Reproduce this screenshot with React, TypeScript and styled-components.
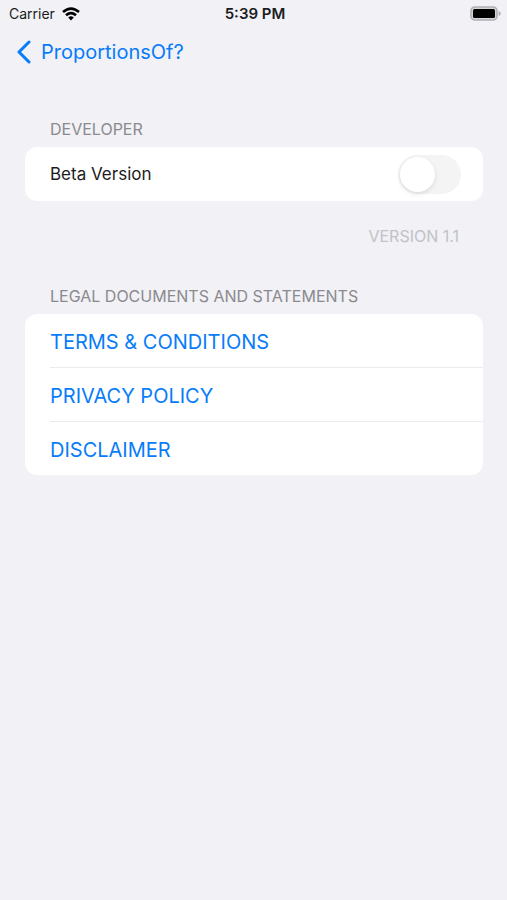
import React, { useState } from "react";
import styled, { createGlobalStyle } from "styled-components";

const GlobalStyle = createGlobalStyle`
  * { box-sizing: border-box; }
  body { margin: 0; background: #f1f1f6; color: #000; font-family: Inter, "Liberation Sans", sans-serif; }
`;
const Page = styled.div`
  min-height: 100vh;
  background: #f1f1f6;
`;
const StatusBar = styled.header`
  display: grid;
  grid-template-columns: 1fr auto 1fr;
  align-items: center;
  height: 27px;
  padding: 0 6px 0 9px;
  font-size: 14px;
  color: #1c1c1e;
`;
const Carrier = styled.div`
  display: flex;
  align-items: center;
  gap: 7px;
`;
const Time = styled.time`
  font-size: 15px;
  font-weight: 600;
`;
const Battery = styled.svg`
  justify-self: end;
`;
const NavBar = styled.nav`
  display: flex;
  align-items: center;
  height: 50px;
  padding: 0 16px;
`;
const BackLink = styled.a`
  display: flex;
  align-items: center;
  gap: 9px;
  color: #087cf9;
  font-size: 20px;
  text-decoration: none;
`;
const Main = styled.main`
  display: flex;
  flex-direction: column;
  gap: 36px;
  padding: 40px 24px 24px 25px;
`;
const Heading = styled.h2`
  margin: 0;
  padding: 0 25px 6px;
  font-size: 16px;
  line-height: 24px;
  font-weight: 400;
  color: #8a8a8f;
`;
const Card = styled.div`
  overflow: hidden;
  border-radius: 12px;
  background: #fff;
`;
const SettingRow = styled.label`
  display: flex;
  align-items: center;
  justify-content: space-between;
  height: 54px;
  padding: 0 22px 0 25px;
  font-size: 17px;
  color: #1c1c1e;
`;
const Switch = styled.input`
  appearance: none;
  width: 63px;
  height: 39px;
  margin: 0;
  padding: 2px;
  border-radius: 20px;
  background: #f4f4f4;
  &::before {
    content: "";
    display: block;
    width: 35px;
    height: 35px;
    border-radius: 50%;
    background: #fff;
    box-shadow: 0 2px 5px #0000001a;
  }
  &:checked { background: #34c759; }
  &:checked::before { margin-left: 24px; }
`;
const Version = styled.p`
  margin: 0;
  padding: 23px 24px 0;
  text-align: right;
  font-size: 16px;
  line-height: 24px;
  color: #c2c2c7;
`;
const LinkList = styled.ul`
  margin: 0;
  padding: 0 0 0 25px;
  list-style: none;
`;
const LinkItem = styled.li`
  & + & { border-top: 1px solid #ebebed; }
`;
const DocumentLink = styled.a`
  display: block;
  padding-top: 3px;
  font-size: 20px;
  line-height: 50px;
  color: #087cf9;
  text-decoration: none;
`;

const documents = ["TERMS & CONDITIONS", "PRIVACY POLICY", "DISCLAIMER"];

export default function App() {
  const [beta, setBeta] = useState(false);
  return (
    <Page>
      <GlobalStyle />
      <StatusBar>
        <Carrier>
          Carrier
          <svg width="18" height="14" viewBox="0 0 18 14" fill="none" stroke="#000" strokeWidth="2.6" aria-hidden="true">
            <path d="M1 5.1Q9-1.9 17 5.1M4 8.2Q9 4 14 8.2" />
            <path d="M6.2 10.4Q9 8.2 11.8 10.4L9 13.4Z" fill="#000" stroke="none" />
          </svg>
        </Carrier>
        <Time>5:39 PM</Time>
        <Battery width="31" height="15" viewBox="0 0 31 15" role="img" aria-label="Battery full">
          <rect x="1" y="1" width="26" height="13" rx="4" fill="#d5d5d9" stroke="#b0b0b4" strokeWidth="1.6" />
          <rect x="3" y="3" width="22" height="9" rx="1.5" />
          <path d="M28.6 5Q30.8 5.8 30.8 7.5T28.6 10Z" fill="#b0b0b4" />
        </Battery>
      </StatusBar>
      <NavBar>
        <BackLink href="#">
          <svg width="16" height="24" viewBox="0 0 16 24" fill="none" stroke="currentColor" strokeWidth="3" strokeLinecap="round" strokeLinejoin="round" aria-hidden="true">
            <path d="M13 2L3 12L13 22" />
          </svg>
          ProportionsOf?
        </BackLink>
      </NavBar>
      <Main>
        <section>
          <Heading>DEVELOPER</Heading>
          <Card>
            <SettingRow>
              Beta Version
              <Switch type="checkbox" role="switch" checked={beta} onChange={(e) => setBeta(e.target.checked)} />
            </SettingRow>
          </Card>
          <Version>VERSION 1.1</Version>
        </section>
        <section>
          <Heading>LEGAL DOCUMENTS AND STATEMENTS</Heading>
          <Card>
            <LinkList>
              {documents.map((name) => (
                <LinkItem key={name}><DocumentLink href="#">{name}</DocumentLink></LinkItem>
              ))}
            </LinkList>
          </Card>
        </section>
      </Main>
    </Page>
  );
}
